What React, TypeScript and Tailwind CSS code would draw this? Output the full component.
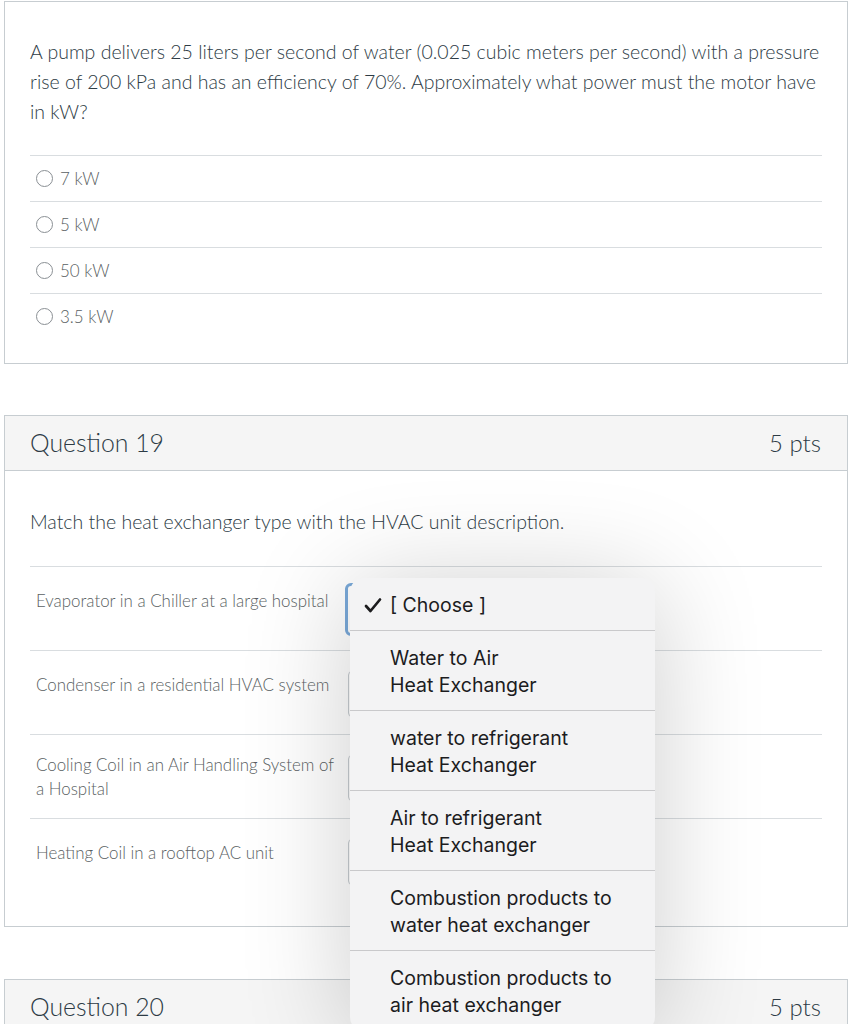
import React from "react";

const lato = { fontFamily: "Lato, 'Open Sans', sans-serif" } as const;

function Radio({ label }: { label: string }) {
  return (
    <div className="flex h-[46px] items-center border-t border-[#d9dde0] pl-[6px]">
      <span className="h-[17px] w-[17px] rounded-full border-[1.5px] border-[#8a8f94] bg-white" />
      <span className="ml-[7px] text-[17px] font-light text-[#5a5f63]">{label}</span>
    </div>
  );
}

function MatchRow({ label, focused, top = 22 }: { label: string; focused?: boolean; top?: number }) {
  return (
    <div className="flex h-[84px] items-start border-t border-[#d9dde0]">
      <div
        className={
          (top === 22 ? "mt-[22px] " : "mt-[18px] ") +
          "w-[312px] pl-[6px] text-[16.9px] font-light leading-[24px] text-[#5a5f63]"
        }
      >
        {label}
      </div>
      <div
        className={
          focused
            ? "ml-[3px] mt-[16px] h-[53px] w-[300px] rounded-[6px] border-[3px] border-[#7aa9d9] bg-white"
            : "ml-[6px] mt-[20px] h-[46px] w-[300px] rounded-[4px] border border-[#c7cdd1] bg-white"
        }
      />
    </div>
  );
}

function Header({ title }: { title: string }) {
  return (
    <div className="flex h-[55px] items-center justify-between border-b border-[#c7cdd1] bg-[#f5f5f5] pl-[25px] pr-[26px]">
      <span className="text-[24.8px] font-light text-[#2d3b45]">{title}</span>
      <span className="text-[24px] font-light text-[#2d3b45]">5 pts</span>
    </div>
  );
}

const options = [
  ["Water to Air", "Heat Exchanger"],
  ["water to refrigerant", "Heat Exchanger"],
  ["Air to refrigerant", "Heat Exchanger"],
  ["Combustion products to", "water heat exchanger"],
  ["Combustion products to", "air heat exchanger"],
];

export default function App() {
  return (
    <div className="relative h-[1024px] w-[865px] overflow-hidden bg-white" style={lato}>
      <div className="pl-[4px] pt-[1px]">
        {/* Card 1 */}
        <div className="w-[844px] border border-[#c7cdd1] bg-white pb-[24px] pl-[25px] pr-[25px] pt-[35px]">
          <p className="text-[19.5px] font-light leading-[30px] text-[#2d3b45]">
            A pump delivers 25 liters per second of water (0.025 cubic meters per second) with a pressure rise of 200 kPa and has an efficiency of 70%. Approximately what power must the motor have in kW?
          </p>
          <div className="mt-[28px]">
            <Radio label="7 kW" />
            <Radio label="5 kW" />
            <Radio label="50 kW" />
            <Radio label="3.5 kW" />
          </div>
        </div>

        {/* Card 2 */}
        <div className="mt-[51px] w-[844px] border border-[#c7cdd1] bg-white">
          <Header title="Question 19" />
          <div className="pb-[24px] pl-[25px] pr-[25px] pt-[38px]">
            <p className="text-[19.5px] font-light leading-[26px] text-[#2d3b45]">
              Match the heat exchanger type with the HVAC unit description.
            </p>
            <div className="mt-[31px]">
              <MatchRow label="Evaporator in a Chiller at a large hospital" focused />
              <MatchRow label="Condenser in a residential HVAC system" />
              <MatchRow label="Cooling Coil in an Air Handling System of a Hospital" top={18} />
              <MatchRow label="Heating Coil in a rooftop AC unit" />
            </div>
          </div>
        </div>

        {/* Card 3 */}
        <div className="mt-[52px] w-[844px] border border-[#c7cdd1] bg-white">
          <Header title="Question 20" />
          <div className="h-[80px]" />
        </div>
      </div>

      {/* Dropdown popup */}
      <div
        className="absolute left-[350px] top-[578px] w-[305px] overflow-hidden rounded-[14px] bg-[#f3f3f4] shadow-[0_8px_110px_rgba(0,0,0,0.2)]"
        style={{ fontFamily: "Inter, 'Liberation Sans', sans-serif" }}
      >
        <div className="flex h-[53px] items-center border-b border-[#c9c9cb] pl-[14px] pt-[3px] text-[19.5px] text-[#1c1c1e]">
          <svg width="18" height="17" viewBox="0 0 18 17" className="mr-[8px]">
            <polyline points="2,9 6.5,14 16,2.5" fill="none" stroke="#1c1c1e" strokeWidth="2.7" strokeLinecap="round" strokeLinejoin="round" />
          </svg>
          <span>[ Choose ]</span>
        </div>
        {options.map((o, i) => (
          <div
            key={i}
            className="flex h-[80px] flex-col justify-center border-b border-[#c9c9cb] pl-[40px] pt-[2px] text-[19.5px] leading-[27px] text-[#1c1c1e]"
          >
            <span>{o[0]}</span>
            <span>{o[1]}</span>
          </div>
        ))}
      </div>
    </div>
  );
}
